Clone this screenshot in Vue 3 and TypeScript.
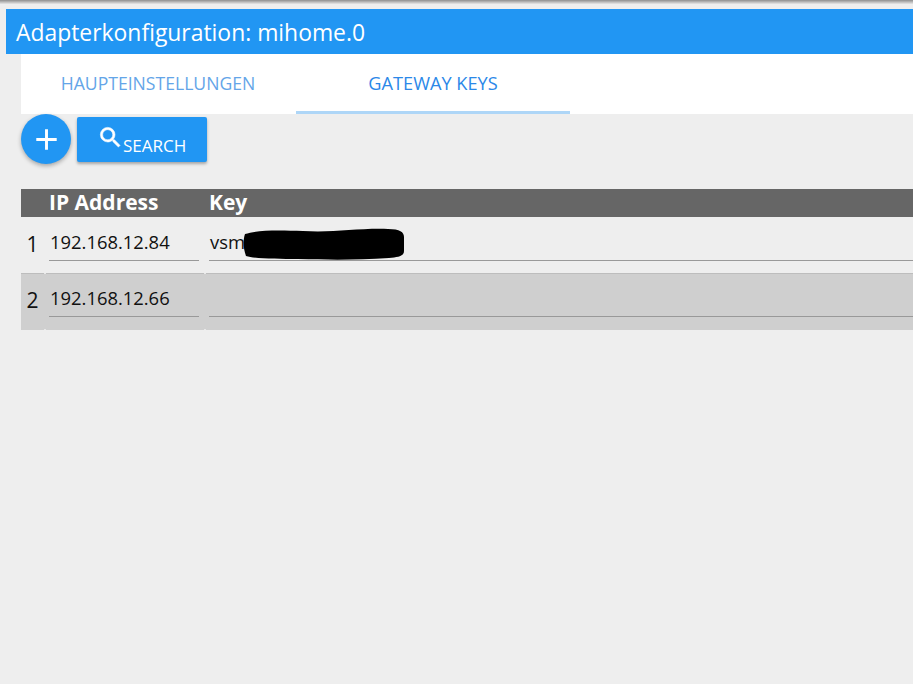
<script setup lang="ts">
interface Row { ip: string; key: string; redacted: boolean }
const rows: Row[] = [
  { ip: '192.168.12.84', key: 'vsm', redacted: true },
  { ip: '192.168.12.66', key: '', redacted: false },
]
</script>

<template>
  <div class="page">
    <div class="top-edge"></div>
    <header class="title">Adapterkonfiguration: mihome.0</header>
    <main class="content">
      <nav class="tabs">
        <div class="tab">HAUPTEINSTELLUNGEN</div>
        <div class="tab active">GATEWAY KEYS</div>
      </nav>
      <div class="actions">
        <button class="fab" aria-label="Add">
          <svg width="35" height="35" viewBox="0 0 24 24"><path d="M19 13h-6v6h-2v-6H5v-2h6V5h2v6h6v2z" fill="#fff" /></svg>
        </button>
        <button class="search">
          <svg class="search-icon" width="27" height="27" viewBox="0 0 24 24"><path d="M15.5 14h-.79l-.28-.27A6.47 6.47 0 0 0 16 9.5 6.5 6.5 0 1 0 9.5 16c1.61 0 3.09-.59 4.23-1.57l.27.28v.79l5 4.99L20.49 19l-4.99-5zm-6 0C7.01 14 5 11.99 5 9.5S7.01 5 9.5 5 14 7.01 14 9.5 11.99 14 9.5 14z" fill="#fff" stroke="#fff" stroke-width="0.5" /></svg>
          <span>SEARCH</span>
        </button>
      </div>
      <div class="table">
        <div class="row head">
          <div class="num"></div>
          <div class="ip">IP Address</div>
          <div class="key">Key</div>
        </div>
        <div v-for="(row, i) in rows" :key="row.ip" class="row body" :class="{ alt: i % 2 === 1 }">
          <div class="num">{{ i + 1 }}</div>
          <div class="ip"><div class="field">{{ row.ip }}</div></div>
          <div class="key">
            <div class="field">{{ row.key }}</div>
            <svg v-if="row.redacted" class="blob" width="162" height="32" viewBox="0 0 162 32">
              <path d="M2 6C14 2 34 2 60 3C90 5 115 0 145 1C157 1 161 4 161 9V23C161 28 156 29 146 30C115 32 90 32 55 31C35 31 12 31 3 28C0 20 0 12 2 6Z" fill="#000" />
            </svg>
          </div>
        </div>
      </div>
    </main>
  </div>
</template>

<style>
html, body { margin: 0; background: #eeeeee; overflow: hidden; }
</style>

<style scoped>
.page {
  width: 913px;
  height: 684px;
  overflow: hidden;
  background: #eeeeee;
  font-family: "Open Sans", "Noto Sans", sans-serif;
  color: #111;
}
.top-edge {
  height: 4px;
  margin-bottom: 5px;
  background: linear-gradient(#8e8e8e, #e6e6e6);
}
.title {
  height: 45px;
  margin-left: 6px;
  padding-left: 10px;
  background: #2196f3;
  color: #fff;
  font-size: 22.9px;
  line-height: 47px;
  white-space: nowrap;
}
.content { margin-left: 21px; }
.tabs {
  display: flex;
  height: 60px;
  background: #fff;
}
.tab {
  box-sizing: border-box;
  width: 275px;
  height: 60px;
  padding-top: 18px;
  padding-right: 1px;
  text-align: center;
  font-size: 17.6px;
  line-height: 22px;
  color: #64a5e8;
  white-space: nowrap;
}
.tab.active {
  width: 274px;
  padding-right: 0;
  font-size: 18.2px;
  color: #2b88e8;
  border-bottom: 3px solid #aed6f7;
}
.actions {
  display: flex;
  align-items: flex-start;
  gap: 6px;
  height: 75px;
}
.fab {
  width: 50px;
  height: 50px;
  padding: 0;
  border: 0;
  border-radius: 50%;
  background: #2196f3;
  display: flex;
  align-items: center;
  justify-content: center;
  box-shadow: 0 2px 4px rgba(0, 0, 0, 0.3);
}
.search {
  box-sizing: border-box;
  width: 130px;
  height: 45px;
  margin-top: 3px;
  padding: 0 0 0 20px;
  border: 0;
  border-radius: 2px;
  background: #2196f3;
  color: #fff;
  font-family: inherit;
  font-size: 17px;
  display: flex;
  align-items: flex-start;
  box-shadow: 0 2px 3px rgba(0, 0, 0, 0.3);
}
.search-icon { margin-top: 7px; flex: none; }
.search span { margin-top: 19px; margin-left: -1px; line-height: 20px; }
.table { width: 892px; }
.row { display: flex; }
.head {
  height: 28px;
  background: #666666;
  color: #fff;
  font-size: 21px;
  font-weight: 700;
  line-height: 27px;
}
.head .ip { padding-left: 4px; }
.head .key { padding-left: 4px; }
.body {
  height: 56px;
  font-size: 18.4px;
}
.alt {
  height: 57px;
  background-color: #cfcfcf;
  background-image:
    linear-gradient(#e8e8e8, #e8e8e8),
    linear-gradient(#e8e8e8, #e8e8e8),
    linear-gradient(#e8e8e8, #e8e8e8),
    linear-gradient(#e8e8e8, #e8e8e8),
    linear-gradient(#bdbdbd, #bdbdbd);
  background-size: 2px 1px, 2px 1px, 2px 1px, 2px 1px, 100% 1px;
  background-position: 23px 0, 183px 0, 23px 56px, 183px 56px, 0 0;
  background-repeat: no-repeat;
}
.num {
  box-sizing: border-box;
  width: 24px;
  flex: none;
  padding-top: 13px;
  padding-right: 1px;
  text-align: center;
  font-size: 21px;
  line-height: 28px;
}
.ip { width: 160px; flex: none; box-sizing: border-box; padding-left: 4px; }
.key { flex: 1; position: relative; padding-left: 4px; }
.body .ip .field { width: 150px; }
.field {
  box-sizing: border-box;
  height: 33px;
  margin-top: 11px;
  padding-left: 1px;
  line-height: 28px;
  border-bottom: 1px solid #999;
  white-space: nowrap;
}
.blob {
  position: absolute;
  left: 38px;
  top: 11px;
}
button { cursor: pointer; }
</style>
